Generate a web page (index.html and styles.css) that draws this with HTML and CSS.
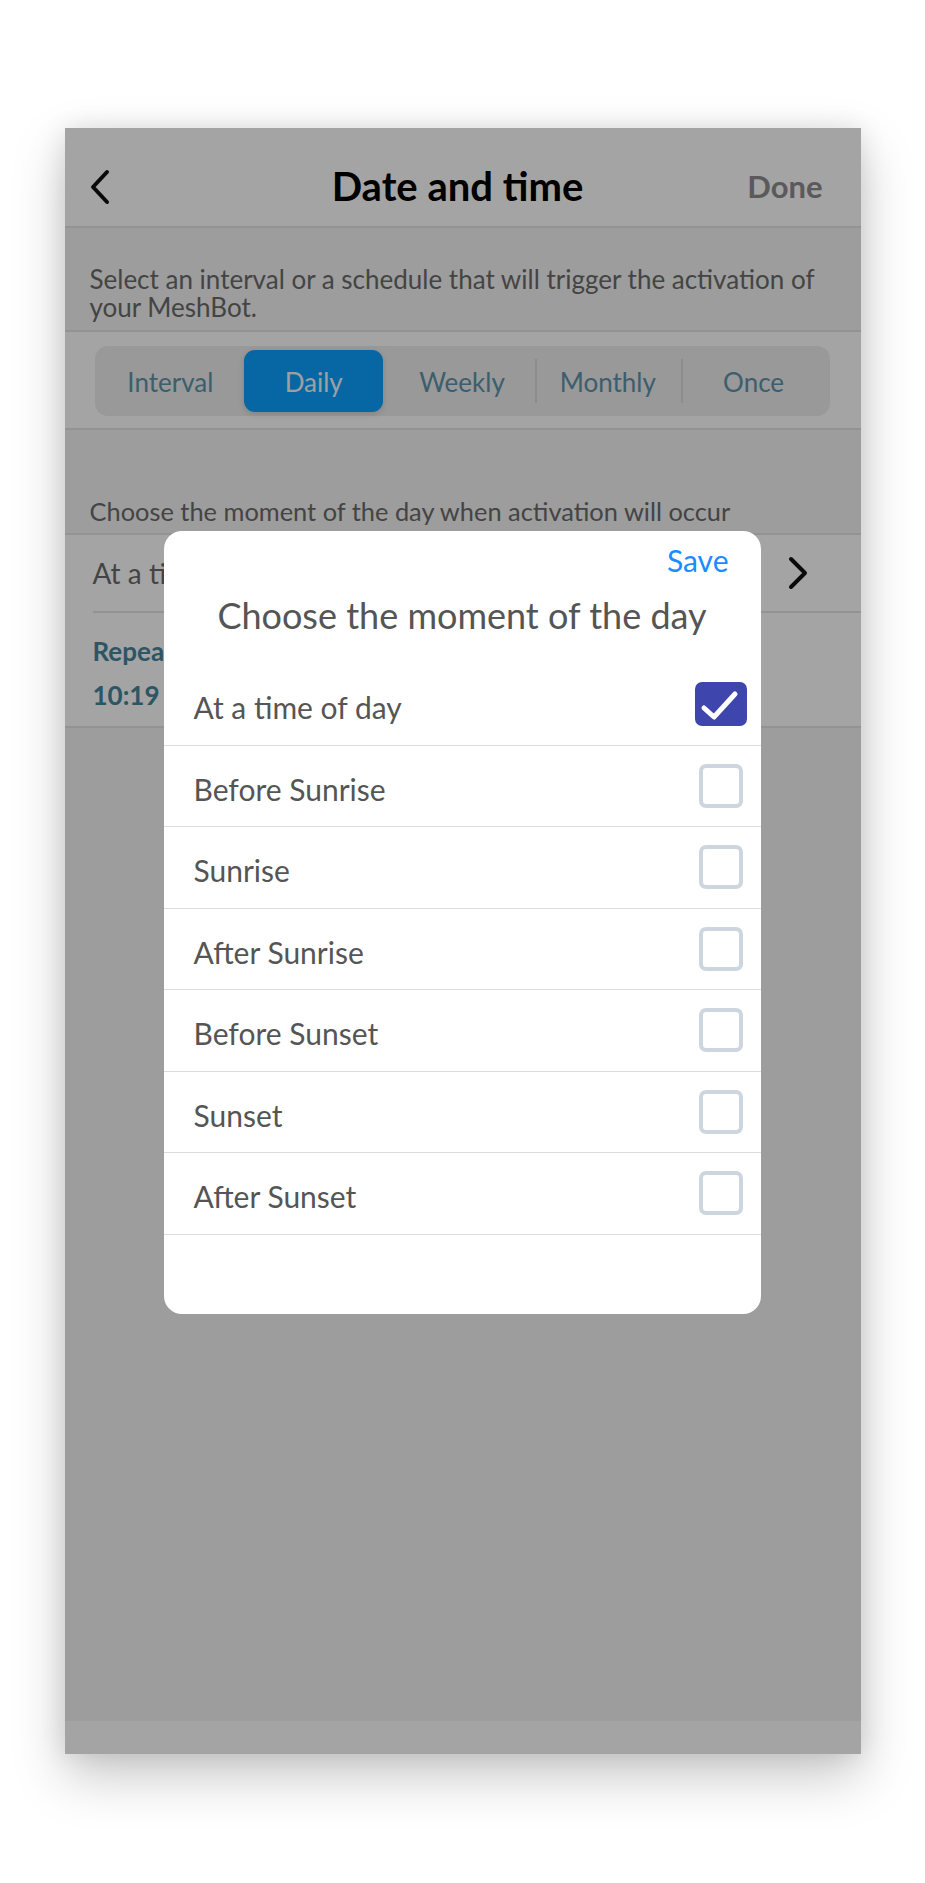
FILE: index.html
```html
<!DOCTYPE html>
<html lang="en">
<head>
<meta charset="utf-8">
<title>Date and time</title>
<link rel="stylesheet" href="styles.css">
</head>
<body>
<div class="phone">
  <header class="nav">
    <button class="nav-back" aria-label="Back">
      <svg width="22" height="36" viewBox="0 0 22 36"><path d="M18 3 L4 18 L18 33" fill="none" stroke="#111" stroke-width="4" stroke-linecap="round" stroke-linejoin="round"/></svg>
    </button>
    <h1 class="nav-title">Date and time</h1>
    <span class="nav-done">Done</span>
  </header>

  <p class="intro">Select an interval or a schedule that will trigger the activation of your MeshBot.</p>

  <section class="segments-wrap">
    <div class="segments">
      <span class="seg">Interval</span>
      <span class="seg seg-active">Daily</span>
      <span class="seg">Weekly</span>
      <span class="seg seg-div">Monthly</span>
      <span class="seg seg-div">Once</span>
    </div>
  </section>

  <p class="section-label">Choose the moment of the day when activation will occur</p>

  <div class="list">
    <div class="list-row">
      <span>At a time of day</span>
      <svg width="22" height="34" viewBox="0 0 22 34"><path d="M4 3 L18 17 L4 31" fill="none" stroke="#111" stroke-width="4" stroke-linecap="round" stroke-linejoin="round"/></svg>
    </div>
    <div class="list-row list-row-tall">
      <div class="repeat">
        <span class="repeat-label">Repeat every day at</span>
        <span class="repeat-time">10:19</span>
      </div>
    </div>
  </div>

  <div class="filler"></div>
  <div class="tabbar"></div>

  <div class="overlay"></div>

  <div class="modal">
    <div class="modal-top"><span class="modal-save">Save</span></div>
    <h2 class="modal-title">Choose the moment of the day</h2>
    <ul class="options">
      <li class="option"><span>At a time of day</span><span class="box-slot"><span class="box box-checked"><svg width="52" height="44" viewBox="0 0 52 44"><path d="M9 26 L19 35 L40 12" fill="none" stroke="#fff" stroke-width="5" stroke-linecap="round" stroke-linejoin="round"/></svg></span></span></li>
      <li class="option"><span>Before Sunrise</span><span class="box-slot"><span class="box"></span></span></li>
      <li class="option"><span>Sunrise</span><span class="box-slot"><span class="box"></span></span></li>
      <li class="option"><span>After Sunrise</span><span class="box-slot"><span class="box"></span></span></li>
      <li class="option"><span>Before Sunset</span><span class="box-slot"><span class="box"></span></span></li>
      <li class="option"><span>Sunset</span><span class="box-slot"><span class="box"></span></span></li>
      <li class="option"><span>After Sunset</span><span class="box-slot"><span class="box"></span></span></li>
    </ul>
  </div>
</div>
</body>
</html>
```

FILE: styles.css
```css
* { box-sizing: border-box; }

html, body {
  margin: 0;
  padding: 0;
  background: #ffffff;
}

body {
  font-family: "Lato", "Noto Sans", sans-serif;
  display: flex;
  justify-content: center;
  padding-top: 128px;
  height: 1883px;
  overflow: hidden;
}

.phone {
  position: relative;
  width: 796px;
  height: 1626px;
  background: #f4f4f4;
  display: flex;
  flex-direction: column;
  overflow: hidden;
  box-shadow: 0 22px 50px rgba(0, 0, 0, 0.22), 0 0 24px rgba(0, 0, 0, 0.10);
}

/* nav bar */
.nav {
  height: 100px;
  background: #ffffff;
  border-bottom: 2px solid #e5e5e5;
  display: grid;
  grid-template-columns: 1fr auto 1fr;
  align-items: center;
  padding: 18px 38px 0 24px;
  flex-shrink: 0;
}

.nav-back {
  border: 0;
  background: none;
  padding: 0;
  width: 22px;
  height: 36px;
  display: flex;
  justify-self: start;
  margin-top: 1px;
}

.nav-title {
  margin: 0;
  text-align: center;
  font-size: 40px;
  font-weight: 700;
  color: #000;
  padding-left: 4px;
}

.nav-done {
  justify-self: end;
  font-size: 31px;
  font-weight: 700;
  color: #8c8c8c;
}

/* intro */
.intro {
  margin: 0;
  padding: 37px 26px 9px 25px;
  font-size: 26px;
  line-height: 28px;
  color: #6b6b6b;
  border-bottom: 2px solid #e5e5e5;
}

/* segmented control */
.segments-wrap {
  background: #ffffff;
  padding: 14px 31px 12px 30px;
  border-bottom: 2px solid #e5e5e5;
}

.segments {
  display: grid;
  grid-template-columns: repeat(5, 1fr);
  height: 70px;
  background: #eeeeee;
  border-radius: 13px;
  padding: 4px 3px;
}

.seg {
  display: flex;
  align-items: center;
  justify-content: center;
  font-size: 26px;
  color: #5f93aa;
  padding-top: 2px;
}

.seg-active {
  background: #0aa0ff;
  color: #f4f8fc;
  border-radius: 11px;
  margin: 0 6px 0 1px;
  box-shadow: 0 2px 6px rgba(0, 0, 0, 0.15);
}

.seg-div {
  background-image: linear-gradient(#dcdcdc, #dcdcdc);
  background-size: 2px 44px;
  background-position: left center;
  background-repeat: no-repeat;
}

/* label */
.section-label {
  margin: 0;
  padding: 67px 20px 8px 25px;
  font-size: 25.4px;
  line-height: 28px;
  color: #6b6b6b;
  border-bottom: 2px solid #e5e5e5;
}

/* list */
.list {
  background: #ffffff;
  border-bottom: 2px solid #e5e5e5;
}

.list-row {
  height: 78px;
  margin-left: 28px;
  padding-right: 52px;
  display: flex;
  align-items: center;
  justify-content: space-between;
  font-size: 28px;
  color: #6b6b6b;
  border-bottom: 2px solid #e5e5e5;
}

.list-row-tall {
  height: 113px;
  border-bottom: none;
  align-items: flex-start;
  padding-top: 22px;
}

.repeat {
  display: flex;
  flex-direction: column;
  gap: 12px;
  font-size: 26px;
  font-weight: 700;
  color: #46849c;
  line-height: 32px;
}

.filler { flex: 1; }

.tabbar {
  height: 33px;
  background: #ffffff;
  flex-shrink: 0;
}

/* overlay & modal */
.overlay {
  position: absolute;
  inset: 0;
  background: rgba(0, 0, 0, 0.357);
}

.modal {
  position: absolute;
  left: 99px;
  top: 403px;
  width: 597px;
  height: 783px;
  background: #ffffff;
  border-radius: 18px;
  display: flex;
  flex-direction: column;
}

.modal-top {
  display: flex;
  justify-content: flex-end;
  padding: 12px 32px 0 0;
}

.modal-save {
  font-size: 30px;
  color: #1a8cff;
  line-height: 34px;
}

.modal-title {
  margin: 16px 0 0;
  text-align: center;
  font-size: 36px;
  font-weight: 400;
  color: #555555;
  line-height: 44px;
}

.options {
  list-style: none;
  margin: 0;
  padding: 0;
  margin-top: 27px;
}

.option {
  height: 81.5px;
  display: flex;
  align-items: center;
  justify-content: space-between;
  padding: 0 14px 0 30px;
  font-size: 30px;
  color: #555555;
  border-bottom: 1.5px solid #dcdcdc;
}

.option > span:first-child { padding-top: 6px; }

.box-slot {
  width: 52px;
  display: flex;
  justify-content: center;
  margin-left: auto;
}

.box {
  width: 44px;
  height: 44px;
  border: 4px solid #cdd6de;
  border-radius: 7px;
  display: block;
}

.box-checked {
  width: 52px;
  border: none;
  background: #3e46ae;
}

.box-checked svg { display: block; }
```
